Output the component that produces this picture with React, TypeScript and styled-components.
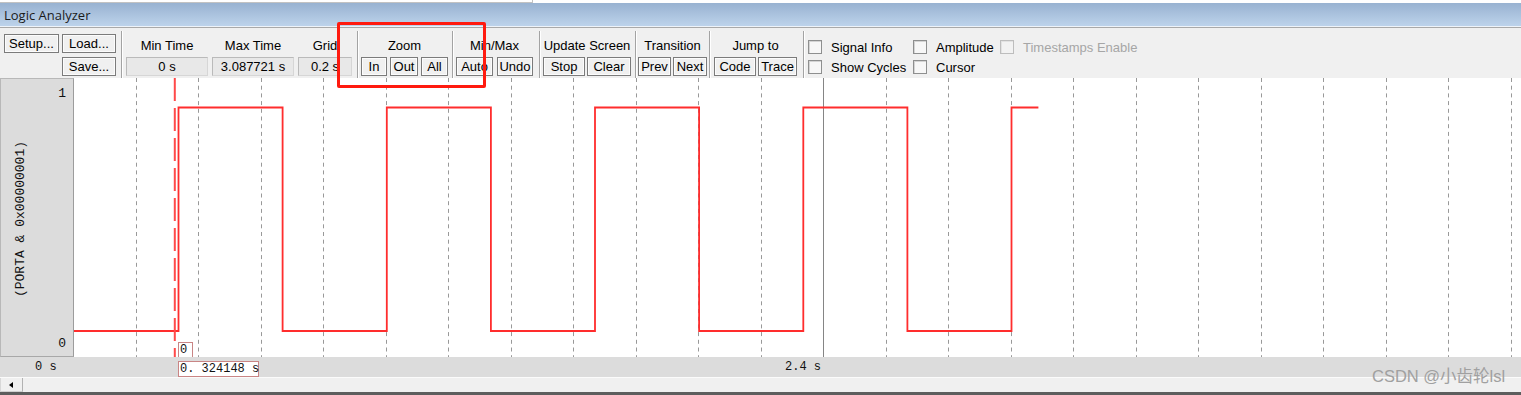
import React from 'react';
import styled, { createGlobalStyle } from 'styled-components';

const GlobalStyle = createGlobalStyle`
  html, body {
    margin: 0;
    padding: 0;
    background: #ffffff;
  }
`;

// time scale of the canvas
const PX_PER_S = 312.5;
const GRID_S = 0.2;
const PLOT_W = 1447;
const PLOT_H = 279;
const HIGH_Y = 29.5;
const LOW_Y = 253;
const FIRST_EDGE = 0.336;
const HALF_PERIOD = 0.3332;
const MAX_TIME = 3.087721;
const CURSOR_T = 0.324148;

const xOf = (t: number) => t * PX_PER_S - 0.5;

const Window = styled.div`
  width: 1521px;
  height: 395px;
  overflow: hidden;
  position: relative;
  display: flex;
  flex-direction: column;
  background: #f0f0f0;
  font-family: "Liberation Sans", Arial, sans-serif;
  font-size: 13px;
  color: #000;
`;

const TopStrip = styled.div`
  height: 3px;
  display: flex;
  background: #ffffff;
`;

const TopTab = styled.div`
  width: 533px;
  box-sizing: border-box;
  border-right: 1px solid #c2c2c2;
  border-bottom: 1px solid #c2c2c2;
`;

const TitleBar = styled.div`
  height: 24px;
  box-sizing: border-box;
  display: flex;
  align-items: center;
  padding-left: 4px;
  background: linear-gradient(#98b2d1, #bdd3eb);
  border-bottom: 1px solid #eef3f9;
  font-family: "Open Sans", "Liberation Sans", sans-serif;
  font-size: 13px;
  color: #1b1b1b;
`;

const Toolbar = styled.div`
  height: 51px;
  box-sizing: border-box;
  border-top: 1px solid #a9a9a9;
  display: flex;
  background: #f0f0f0;
`;

const Section = styled.div<{ $w?: number; $pl: number }>`
  ${p => (p.$w ? `width: ${p.$w}px;` : 'flex: 1;')}
  box-sizing: border-box;
  padding-left: ${p => p.$pl}px;
  display: flex;
  gap: 4px;
`;

const Separator = styled.div`
  width: 2px;
  box-sizing: border-box;
  margin-top: 3px;
  border-left: 1px solid #a3a3a3;
  border-right: 1px solid #ffffff;
`;

const FileGrid = styled.div`
  margin-top: 6px;
  display: grid;
  grid-template-columns: 55px 54px;
  grid-template-rows: 19px 19px;
  column-gap: 3px;
  row-gap: 4px;
`;

const Group = styled.div`
  display: flex;
  flex-direction: column;
  align-items: center;
`;

const GroupLabel = styled.div`
  height: 20px;
  line-height: 20px;
  margin-top: 8px;
  margin-bottom: 1px;
  white-space: nowrap;
`;

const Controls = styled.div<{ $gap: number }>`
  display: flex;
  gap: ${p => p.$gap}px;
`;

const Btn = styled.button<{ $w: number; $col?: number }>`
  width: ${p => p.$w}px;
  height: 19px;
  box-sizing: border-box;
  margin: 0;
  padding: 0;
  font: inherit;
  color: #000;
  line-height: 17px;
  text-align: center;
  white-space: nowrap;
  background: #f0f0f0;
  border: 1px solid #7b7b7b;
  border-radius: 0;
  box-shadow: inset 0 0 0 1px #fcfcfc;
  ${p => (p.$col ? `grid-column: ${p.$col};` : '')}
`;

const ValueBox = styled.div<{ $w: number }>`
  width: ${p => p.$w}px;
  height: 19px;
  box-sizing: border-box;
  line-height: 17px;
  text-align: center;
  white-space: nowrap;
  background: #e8e8e8;
  border: 1px solid #d6d6d6;
  border-top-color: #bababa;
  border-left-color: #bababa;
`;

const Checks = styled.div`
  margin-top: 9px;
  display: grid;
  grid-template-columns: 105px 87px auto;
  grid-template-rows: 20px 20px;
`;

const CheckItem = styled.label<{ $disabled?: boolean }>`
  display: flex;
  align-items: center;
  gap: 9px;
  white-space: nowrap;
  color: ${p => (p.$disabled ? '#a6a6a6' : '#000')};
`;

const CheckBox = styled.span<{ $disabled?: boolean }>`
  width: 14px;
  height: 14px;
  box-sizing: border-box;
  border: 1px solid ${p => (p.$disabled ? '#bdbdbd' : '#8e8f8f')};
  background: ${p => (p.$disabled ? '#f2f2f2' : '#f7f7f7')};
  box-shadow: inset 1px 1px 0 ${p => (p.$disabled ? '#e2e2e2' : '#d4d4d4')};
`;

const Highlight = styled.div`
  position: absolute;
  left: 337px;
  top: 22px;
  width: 149px;
  height: 66px;
  box-sizing: border-box;
  border: 3px solid #ff1a0f;
  border-radius: 2px;
`;

const PlotRow = styled.div`
  height: 279px;
  display: flex;
`;

const LabelPanel = styled.div`
  width: 74px;
  box-sizing: border-box;
  display: flex;
  background: #dcdcdc;
  border-top: 1px solid #b8b8b8;
  border-left: 1px solid #b8b8b8;
  border-right: 1px solid #9c9c9c;
  border-bottom: 1px solid #a8a8a8;
  font-family: "Liberation Mono", "DejaVu Sans Mono", monospace;
  font-size: 13px;
  color: #111;
`;

const SignalName = styled.div`
  writing-mode: vertical-rl;
  transform: rotate(180deg);
  align-self: center;
  margin-left: 12px;
  margin-top: 4px;
  white-space: nowrap;
`;

const LevelCol = styled.div`
  flex: 1;
  display: flex;
  flex-direction: column;
  justify-content: space-between;
  align-items: flex-end;
  padding: 7px 7px 5px 0;
  line-height: 15px;
`;

const Canvas = styled.div`
  flex: 1;
  position: relative;
  background: #ffffff;
  svg {
    display: block;
  }
`;

const CursorValue = styled.div`
  position: absolute;
  box-sizing: border-box;
  background: #ffffff;
  border: 1px solid #c98585;
  font-family: "Liberation Mono", "DejaVu Sans Mono", monospace;
  font-size: 12px;
  line-height: 14px;
  padding-left: 1px;
  color: #111;
  white-space: nowrap;
`;

const AxisRow = styled.div`
  height: 20px;
  position: relative;
  background: #dcdcdc;
  font-family: "Liberation Mono", "DejaVu Sans Mono", monospace;
  font-size: 12px;
  color: #111;
`;

const AxisLabel = styled.span`
  position: absolute;
  top: 3px;
  line-height: 14px;
  white-space: pre;
`;

const ScrollBar = styled.div`
  height: 15px;
  box-sizing: border-box;
  display: flex;
  background: #f0f0f0;
  border-top: 1px solid #fbfbfb;
`;

const ScrollButton = styled.div`
  width: 23px;
  box-sizing: border-box;
  display: flex;
  align-items: center;
  justify-content: center;
  border-left: 1px solid #d8d8d8;
  border-right: 1px solid #b2b2b2;
  border-bottom: 1px solid #d0d0d0;
  &::before {
    content: '';
    width: 0;
    height: 0;
    margin-left: -2px;
    border-top: 3.5px solid transparent;
    border-bottom: 3.5px solid transparent;
    border-right: 4px solid #000;
  }
`;

const BottomEdge = styled.div`
  height: 3px;
  background: #5d5d5d;
`;

const Watermark = styled.div`
  position: absolute;
  left: 1372px;
  top: 367px;
  font-family: "Liberation Sans", "Noto Sans CJK SC", sans-serif;
  font-size: 16.5px;
  line-height: 19px;
  color: #a0a0a0;
  white-space: nowrap;
`;

function Waveform() {
  const gridLines: number[] = [];
  for (let k = 1; k * GRID_S * PX_PER_S < PLOT_W + 1; k++) gridLines.push(k);

  let d = `M0 ${LOW_Y}`;
  let high = false;
  for (let t = FIRST_EDGE; t < MAX_TIME; t += HALF_PERIOD) {
    const x = xOf(t).toFixed(1);
    d += ` H${x} V${high ? LOW_Y : HIGH_Y}`;
    high = !high;
  }
  d += ` H${xOf(MAX_TIME).toFixed(1)}`;

  const cursorX = xOf(CURSOR_T);

  return (
    <svg width={PLOT_W} height={PLOT_H} viewBox={`0 0 ${PLOT_W} ${PLOT_H}`}>
      {gridLines.map(k => {
        const x = Math.floor(k * GRID_S * PX_PER_S - 0.5) + 0.5;
        const solid = k === 12;
        return (
          <line
            key={k}
            x1={x}
            x2={x}
            y1={0}
            y2={PLOT_H}
            stroke={solid ? '#858585' : '#999999'}
            strokeWidth={1}
            strokeDasharray={solid ? undefined : '4 3.7'}
          />
        );
      })}
      <path d={d} fill="none" stroke="#ff2d2d" strokeWidth={1.8} />
      <line
        x1={cursorX}
        x2={cursorX}
        y1={0}
        y2={PLOT_H}
        stroke="#ff4a4a"
        strokeWidth={2}
        strokeDasharray="23 7"
      />
    </svg>
  );
}

export default function App() {
  return (
    <Window>
      <GlobalStyle />
      <TopStrip>
        <TopTab />
      </TopStrip>
      <TitleBar>Logic Analyzer</TitleBar>

      <Toolbar>
        <Section $w={121} $pl={4}>
          <FileGrid>
            <Btn $w={55}>Setup...</Btn>
            <Btn $w={54}>Load...</Btn>
            <Btn $w={54} $col={2}>Save...</Btn>
          </FileGrid>
        </Section>
        <Separator />
        <Section $w={234} $pl={3}>
          <Group>
            <GroupLabel>Min Time</GroupLabel>
            <ValueBox $w={82}>0 s</ValueBox>
          </Group>
          <Group>
            <GroupLabel>Max Time</GroupLabel>
            <ValueBox $w={82}>3.087721 s</ValueBox>
          </Group>
          <Group>
            <GroupLabel>Grid</GroupLabel>
            <ValueBox $w={54}>0.2 s</ValueBox>
          </Group>
        </Section>
        <Separator />
        <Section $w={93} $pl={2}>
          <Group>
            <GroupLabel>Zoom</GroupLabel>
            <Controls $gap={3}>
              <Btn $w={26}>In</Btn>
              <Btn $w={28}>Out</Btn>
              <Btn $w={27}>All</Btn>
            </Controls>
          </Group>
        </Section>
        <Separator />
        <Section $w={85} $pl={2}>
          <Group>
            <GroupLabel>Min/Max</GroupLabel>
            <Controls $gap={4}>
              <Btn $w={37}>Auto</Btn>
              <Btn $w={36}>Undo</Btn>
            </Controls>
          </Group>
        </Section>
        <Separator />
        <Section $w={94} $pl={2}>
          <Group>
            <GroupLabel>Update Screen</GroupLabel>
            <Controls $gap={2}>
              <Btn $w={42}>Stop</Btn>
              <Btn $w={44}>Clear</Btn>
            </Controls>
          </Group>
        </Section>
        <Separator />
        <Section $w={72} $pl={1}>
          <Group>
            <GroupLabel>Transition</GroupLabel>
            <Controls $gap={2}>
              <Btn $w={33}>Prev</Btn>
              <Btn $w={34}>Next</Btn>
            </Controls>
          </Group>
        </Section>
        <Separator />
        <Section $w={92} $pl={3}>
          <Group>
            <GroupLabel>Jump to</GroupLabel>
            <Controls $gap={2}>
              <Btn $w={42}>Code</Btn>
              <Btn $w={39}>Trace</Btn>
            </Controls>
          </Group>
        </Section>
        <Separator />
        <Section $pl={3}>
          <Checks>
            <CheckItem>
              <CheckBox />
              Signal Info
            </CheckItem>
            <CheckItem>
              <CheckBox />
              Amplitude
            </CheckItem>
            <CheckItem $disabled>
              <CheckBox $disabled />
              Timestamps Enable
            </CheckItem>
            <CheckItem>
              <CheckBox />
              Show Cycles
            </CheckItem>
            <CheckItem>
              <CheckBox />
              Cursor
            </CheckItem>
          </Checks>
        </Section>
      </Toolbar>

      <PlotRow>
        <LabelPanel>
          <SignalName>(PORTA &amp; 0x00000001)</SignalName>
          <LevelCol>
            <span>1</span>
            <span>0</span>
          </LevelCol>
        </LabelPanel>
        <Canvas>
          <Waveform />
          <CursorValue style={{ left: 104, top: 264, width: 15, height: 16 }}>0</CursorValue>
        </Canvas>
      </PlotRow>

      <AxisRow>
        <AxisLabel style={{ left: 35 }}>0 s</AxisLabel>
        <AxisLabel style={{ left: 785 }}>2.4 s</AxisLabel>
        <CursorValue style={{ left: 178, top: 4, width: 81, height: 16 }}>0. 324148 s</CursorValue>
      </AxisRow>

      <ScrollBar>
        <ScrollButton />
      </ScrollBar>
      <BottomEdge />

      <Highlight />
      <Watermark>CSDN @小齿轮lsl</Watermark>
    </Window>
  );
}
